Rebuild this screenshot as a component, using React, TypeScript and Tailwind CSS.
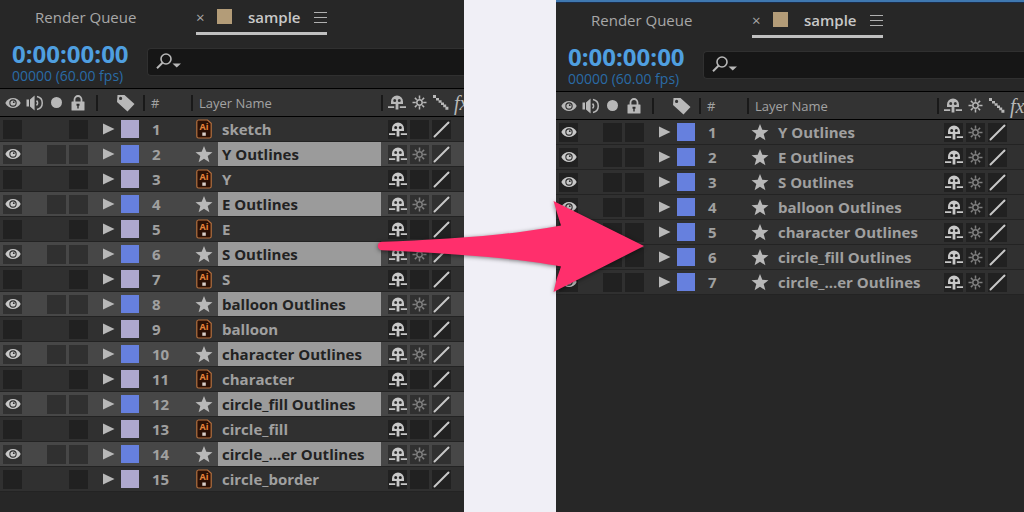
import React from 'react';

type LayerKind = 'ai' | 'shape';

interface Layer {
  name: string;
  kind: LayerKind;
  selected?: boolean;
}

const importedLayers: Layer[] = [
  { name: 'sketch', kind: 'ai' },
  { name: 'Y Outlines', kind: 'shape', selected: true },
  { name: 'Y', kind: 'ai' },
  { name: 'E Outlines', kind: 'shape', selected: true },
  { name: 'E', kind: 'ai' },
  { name: 'S Outlines', kind: 'shape', selected: true },
  { name: 'S', kind: 'ai' },
  { name: 'balloon Outlines', kind: 'shape', selected: true },
  { name: 'balloon', kind: 'ai' },
  { name: 'character Outlines', kind: 'shape', selected: true },
  { name: 'character', kind: 'ai' },
  { name: 'circle_fill Outlines', kind: 'shape', selected: true },
  { name: 'circle_fill', kind: 'ai' },
  { name: 'circle_...er Outlines', kind: 'shape', selected: true },
  { name: 'circle_border', kind: 'ai' },
];

const outlineLayers: Layer[] = [
  { name: 'Y Outlines', kind: 'shape' },
  { name: 'E Outlines', kind: 'shape' },
  { name: 'S Outlines', kind: 'shape' },
  { name: 'balloon Outlines', kind: 'shape' },
  { name: 'character Outlines', kind: 'shape' },
  { name: 'circle_fill Outlines', kind: 'shape' },
  { name: 'circle_...er Outlines', kind: 'shape' },
];

const EyeIcon = () => (
  <svg width="16" height="12" viewBox="0 0 16 12" aria-hidden="true">
    <path d="M0.3 6C3.5 -0.6 12.5 -0.6 15.7 6C12.5 12.6 3.5 12.6 0.3 6Z" fill="currentColor" />
    <circle cx="8" cy="6" r="3.7" fill="#2b2b2b" />
    <circle cx="8" cy="6" r="2.6" fill="currentColor" />
    <circle cx="8.8" cy="5.2" r="0.9" fill="#2b2b2b" />
  </svg>
);

const SpeakerIcon = () => (
  <svg width="18" height="16" viewBox="0 0 18 16" aria-hidden="true">
    <path d="M0.5 4.5H3V11.5H0.5ZM4 4.5L8.6 0.5V15.5L4 11.5Z" fill="currentColor" />
    <path d="M10.5 5.6C12 7 12 9 10.5 10.4M11 1.6C18 3 18 13 11 14.4" fill="none" stroke="currentColor" strokeWidth="1.5" />
  </svg>
);

const LockIcon = () => (
  <svg width="14" height="16" viewBox="0 0 14 16" aria-hidden="true">
    <path d="M3.5 7.5V4.5a3.5 3.5 0 0 1 7 0V7.5" fill="none" stroke="currentColor" strokeWidth="1.8" />
    <rect x="0.5" y="6.5" width="13" height="9" rx="0.5" fill="currentColor" />
    <path d="M5.5 8.8h3v2h-.8v2.8h-1.4V10.8h-.8Z" fill="#2b2b2b" />
  </svg>
);

const TagIcon = () => (
  <svg width="19" height="18" viewBox="0 0 19 18" aria-hidden="true">
    <path fillRule="evenodd" d="M1.5 1H8.5L18.5 10L11.5 17.5L1 8ZM4.6 2.8a1.6 1.6 0 1 0 0 3.2a1.6 1.6 0 1 0 0-3.2Z" fill="currentColor" />
  </svg>
);

const ShyIcon = () => (
  <svg width="18" height="15" viewBox="0 0 18 15" aria-hidden="true">
    <path
      fillRule="evenodd"
      d="M3 9V6.5a6 6 0 0 1 12 0V9ZM6.7 4a1.5 1.5 0 1 0 0 3a1.5 1.5 0 1 0 0-3ZM11.3 4a1.5 1.5 0 1 0 0 3a1.5 1.5 0 1 0 0-3Z"
      fill="currentColor"
    />
    <path d="M7.6 8H10.4V14.5H7.6ZM0 11.2H6.2V12.9H0ZM11.8 11.2H18V12.9H11.8Z" fill="currentColor" />
  </svg>
);

const SunIcon = () => (
  <svg width="15" height="15" viewBox="0 0 15 15" fill="none" stroke="currentColor" strokeWidth="1.5" aria-hidden="true">
    <circle cx="7.5" cy="7.5" r="2.7" />
    <path d="M7.5 0.5V3.8M7.5 11.2V14.5M0.5 7.5H3.8M11.2 7.5H14.5M2.9 2.9L4.8 4.8M10.2 10.2L12.1 12.1M2.9 12.1L4.8 10.2M10.2 4.8L12.1 2.9" />
  </svg>
);

const StairsIcon = () => (
  <svg width="16" height="15" viewBox="0 0 16 15" fill="currentColor" aria-hidden="true">
    <path d="M0 0h3v3h-3zM3 3h3v2.6h-3zM5.6 5.2h3v2.6h-3zM8 7.4h3v2.6h-3zM10.2 9.6h3v2.6h-3zM12.4 11.8h3v3h-3z" />
  </svg>
);

const SlashIcon = () => (
  <svg width="17" height="17" viewBox="0 0 17 17" aria-hidden="true">
    <path d="M1.5 15.5L15.5 1.5" stroke="currentColor" strokeWidth="2" strokeLinecap="round" />
  </svg>
);

const StarIcon = () => (
  <svg width="18" height="17" viewBox="0 0 18 17" aria-hidden="true">
    <path d="M9 0L11.3 5.8L17.5 6.2L12.7 10.1L14.4 16.3L9 12.8L3.6 16.3L5.3 10.1L0.5 6.2L6.7 5.8Z" fill="#b8b8b8" />
  </svg>
);

const AiIcon = () => (
  <svg width="16" height="20" viewBox="0 0 16 20" aria-hidden="true">
    <path d="M2.5 1H11.5L15.2 4.2V17.2a1.8 1.8 0 0 1-1.8 1.8H2.6a1.8 1.8 0 0 1-1.8-1.8V2.8A1.8 1.8 0 0 1 2.5 1Z" fill="#2a1005" stroke="#b5703f" strokeWidth="1.2" />
    <text x="8" y="11" textAnchor="middle" fontSize="9" fontWeight="700" fill="#e5843c">Ai</text>
    <path d="M6.3 13.5H9.8V16.8H6.3Z" fill="#d9cfc8" />
  </svg>
);

const SearchIcon = () => (
  <svg width="26" height="17" viewBox="0 0 26 17" aria-hidden="true">
    <circle cx="10" cy="6" r="5" fill="none" stroke="currentColor" strokeWidth="1.6" />
    <path d="M6.5 9.8L1 15.2" stroke="currentColor" strokeWidth="2" />
    <path d="M16.5 10.5H25L20.7 14.5Z" fill="currentColor" />
  </svg>
);

interface SwitchBoxProps {
  label: string;
  selected?: boolean;
  children?: React.ReactNode;
}

const SwitchBox: React.FC<SwitchBoxProps> = ({ label, selected, children }) => (
  <button
    type="button"
    aria-label={label}
    className={`ml-auto flex h-[19px] w-[19px] items-center justify-center ${selected ? 'bg-[#303030]' : 'bg-[#212121]'}`}
  >
    {children}
  </button>
);

const HeaderCell: React.FC<{ className?: string; children?: React.ReactNode }> = ({ className = '', children }) => (
  <div className={`flex h-4 items-center border-l-2 border-[#191919] ${className}`}>{children}</div>
);

const LayerRow: React.FC<{ layer: Layer; index: number }> = ({ layer, index }) => {
  const { name, kind, selected } = layer;
  const isShape = kind === 'shape';

  return (
    <tr className={`h-[25px] border-b border-[#232323] text-[#c8c8c8] ${selected ? 'bg-[#474747]' : 'bg-[#303030]'}`}>
      <td className="p-0">
        <SwitchBox label={`Toggle ${name}`} selected={selected}>
          {isShape && <EyeIcon />}
        </SwitchBox>
      </td>
      <td className="p-0" />
      <td className="p-0">{isShape && <SwitchBox label={`Solo ${name}`} selected={selected} />}</td>
      <td className="p-0 pr-2">
        <SwitchBox label={`Lock ${name}`} selected={selected} />
      </td>
      <td className="p-0 pl-[7px]">
        <button type="button" aria-label={`Expand ${name}`} className="block">
          <svg width="12" height="12" viewBox="0 0 12 12" aria-hidden="true">
            <path d="M0 0.5L11.5 6L0 11.5Z" fill="#b8b8b8" />
          </svg>
        </button>
      </td>
      <td className="p-0 pl-[3px]">
        <div className={`h-[18px] w-[18px] ${isShape ? 'bg-[#6680de]' : 'bg-[#aea8ce]'}`} />
      </td>
      <td className="p-0 pl-[9px] text-[#a0a0a0]">{index}</td>
      <td className="p-0 pr-px">
        <div className="flex justify-center">{isShape ? <StarIcon /> : <AiIcon />}</div>
      </td>
      <td className={`truncate p-0 pl-1 ${selected ? 'bg-[#9b9b9b] text-[#222]' : 'text-[#a0a0a0]'}`}>{name}</td>
      <td className="p-0">
        <SwitchBox label={`Shy ${name}`} selected={selected}>
          <ShyIcon />
        </SwitchBox>
      </td>
      <td className="p-0 text-[#808080]">
        <SwitchBox label={`Collapse ${name}`} selected={selected}>
          {isShape && <SunIcon />}
        </SwitchBox>
      </td>
      <td className="p-0">
        <SwitchBox label={`Quality ${name}`} selected={selected}>
          <SlashIcon />
        </SwitchBox>
      </td>
      <td className="p-0" />
    </tr>
  );
};

interface TimelinePanelProps {
  id: string;
  layers: Layer[];
  active?: boolean;
}

const TimelinePanel: React.FC<TimelinePanelProps> = ({ id, layers, active }) => (
  <section className="min-w-0 overflow-hidden bg-[#272727]">
    {active && <div className="h-[3px] border-t-2 border-[#3f78b0] bg-[#1a2c4a]" />}

    {/* Tabs */}
    <nav className="flex h-[35px] text-[15px] text-[#a8a8a8]">
      <button type="button" className="ml-[35px] w-[161px] shrink-0 text-left">Render Queue</button>
      <div className="flex w-[131px] shrink-0 items-center border-b-[3px] border-[#c0c0c0] pt-[3px]">
        <button type="button" aria-label="Close tab" className="w-[21px] text-left">×</button>
        <span className="mb-[3px] h-[15px] w-[15px] bg-[#b39c78]" />
        <button type="button" className="ml-4 font-semibold text-[#c8c8c8]">sample</button>
        <button type="button" aria-label="Panel menu" className="ml-auto flex w-[13px] flex-col gap-1">
          <span className="h-px w-full bg-[#b0b0b0]" />
          <span className="h-px w-full bg-[#b0b0b0]" />
          <span className="h-px w-full bg-[#b0b0b0]" />
        </button>
      </div>
    </nav>

    {/* Timecode and search */}
    <div className="flex h-[53px] items-center pl-3">
      <div className="w-[135px] shrink-0 pt-1 whitespace-nowrap">
        <div className="text-2xl leading-6 font-bold text-[#4f9fe0]">0:00:00:00</div>
        <div className="text-sm leading-5 text-[#2a6ba6]">00000 (60.00 fps)</div>
      </div>
      <label htmlFor={`${id}-search`} className="flex h-7 flex-1 items-center rounded-l border border-r-0 border-[#303030] bg-[#161616] pl-2 text-[#b8b8b8]">
        <SearchIcon />
        <input id={`${id}-search`} type="text" aria-label="Search layers" className="min-w-0 flex-1 bg-transparent pl-2 text-sm outline-none" />
      </label>
    </div>

    {/* Layers */}
    <table className="w-full table-fixed border-collapse text-[15px] leading-5 font-bold">
      <colgroup>
        <col className="w-[22px]" />
        <col className="w-[22px]" />
        <col className="w-[22px]" />
        <col className="w-[30px]" />
        <col className="w-[22px]" />
        <col className="w-[25px]" />
        <col className="w-[48px]" />
        <col className="w-[27px]" />
        <col className="w-[163px]" />
        <col className="w-[26px]" />
        <col className="w-[22px]" />
        <col className="w-[22px]" />
        <col />
      </colgroup>
      <thead>
        <tr className="h-7 border-y border-black bg-[#333] text-left text-[13px] text-[#b8b8b8]">
          <th className="p-0 pl-[5px]"><EyeIcon /></th>
          <th className="p-0 pl-1"><SpeakerIcon /></th>
          <th className="p-0 pl-[7px]"><div className="h-[11px] w-[11px] rounded-full bg-[#b8b8b8]" /></th>
          <th className="p-0 pl-[5px]"><LockIcon /></th>
          <th colSpan={2} className="p-0"><HeaderCell className="pl-[18px]"><TagIcon /></HeaderCell></th>
          <th className="p-0 font-normal text-[#a3a3a3]"><HeaderCell className="pl-[6px]">#</HeaderCell></th>
          <th colSpan={2} className="p-0 font-normal text-[#a3a3a3]"><HeaderCell className="pl-[6px]">Layer Name</HeaderCell></th>
          <th className="p-0"><HeaderCell className="pl-[5px]"><ShyIcon /></HeaderCell></th>
          <th className="p-0 pl-[5px]"><SunIcon /></th>
          <th className="p-0 pl-1"><StairsIcon /></th>
          <th className="overflow-hidden p-0 pl-[3px] font-['Liberation_Serif',serif] text-xl leading-5 font-normal italic">fx</th>
        </tr>
      </thead>
      <tbody>
        {layers.map((layer, i) => (
          <LayerRow key={layer.name} layer={layer} index={i + 1} />
        ))}
      </tbody>
    </table>
  </section>
);

export default function App() {
  return (
    <main className="relative grid min-h-screen grid-cols-[464fr_92fr_468fr] overflow-hidden bg-[#f0eff6] font-['Open_Sans',sans-serif]">
      <TimelinePanel id="before" layers={importedLayers} />
      <div />
      <TimelinePanel id="after" layers={outlineLayers} active />

      {/* Arrow laid over both panels */}
      <svg
        className="pointer-events-none absolute top-[200px] left-[377px] drop-shadow-[0_1px_2px_rgba(0,0,0,0.5)]"
        width="270"
        height="94"
        viewBox="0 0 270 94"
        aria-hidden="true"
      >
        <path
          d="M5 41.8C60 40 130 36 184 25.5Q180 13 176.5 1L267 46L176.5 92Q179 79 184 66.5C140 58 70 53 5 50.2A4.2 4.2 0 0 1 5 41.8Z"
          fill="#ff2f6c"
        />
      </svg>
    </main>
  );
}
